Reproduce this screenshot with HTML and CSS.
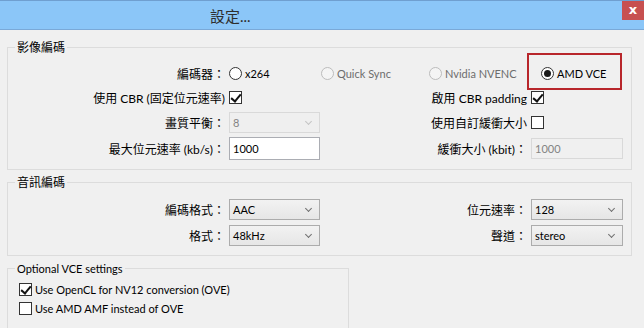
FILE: index.html
```html
<!DOCTYPE html>
<html lang="zh-Hant">
<head>
    <meta charset="UTF-8">
    <title>設定...</title>
    <link rel="stylesheet" href="styles.css">
</head>
<body>
    <div class="titlebar">
        <span class="title">設定...</span>
        <span class="close">x</span>
    </div>

    <fieldset class="group">
        <legend>影像編碼</legend>
        <div class="form-grid video-grid">
            <span class="lbl">編碼器：</span>
            <div class="radios">
                <span class="radio-item w-x264"><span class="radio"></span>x264</span>
                <span class="radio-item w-qsv disabled"><span class="radio"></span>Quick Sync</span>
                <span class="radio-item w-nvenc disabled"><span class="radio"></span>Nvidia NVENC</span>
                <span class="radio-item amd"><span class="radio on"></span>AMD VCE<span class="highlight"></span></span>
            </div>

            <span class="lbl">使用 CBR (固定位元速率)</span>
            <span class="cell"><span class="check on"></span></span>
            <span class="lbl">啟用 CBR padding</span>
            <span class="cell"><span class="check on"></span></span>

            <span class="lbl">畫質平衡：</span>
            <span class="select disabled">8</span>
            <span class="lbl">使用自訂緩衝大小</span>
            <span class="cell"><span class="check"></span></span>

            <span class="lbl">最大位元速率 (kb/s)：</span>
            <span class="textbox">1000</span>
            <span class="lbl">緩衝大小 (kbit)：</span>
            <span class="textbox disabled">1000</span>
        </div>
    </fieldset>

    <fieldset class="group">
        <legend>音訊編碼</legend>
        <div class="form-grid audio-grid">
            <span class="lbl">編碼格式：</span>
            <span class="select">AAC</span>
            <span class="lbl">位元速率：</span>
            <span class="select">128</span>

            <span class="lbl">格式：</span>
            <span class="select">48kHz</span>
            <span class="lbl">聲道：</span>
            <span class="select">stereo</span>
        </div>
    </fieldset>

    <fieldset class="group group-small">
        <legend>Optional VCE settings</legend>
        <div class="option"><span class="check on"></span>Use OpenCL for NV12 conversion (OVE)</div>
        <div class="option"><span class="check"></span>Use AMD AMF instead of OVE</div>
    </fieldset>
</body>
</html>
```

FILE: styles.css
```css
* {
    margin: 0;
    padding: 0;
    box-sizing: border-box;
}

body {
    background: #f0f0f0;
    font-family: Lato, "Noto Sans CJK TC", sans-serif;
    font-size: 12px;
    color: #000;
    overflow: hidden;
}

/* window title */
.titlebar {
    display: flex;
    align-items: flex-start;
    height: 30px;
    background: #8bc6f8;
    border-top: 1px solid #6f9fd0;
    border-bottom: 1px solid #7aa9d8;
}

.title {
    padding: 5px 0 0 210px;
    font-size: 15px;
    line-height: 20px;
    color: #2e2e2e;
}

.close {
    margin-left: auto;
    width: 22px;
    height: 19px;
    background: #c75050;
    color: #fff;
    font-family: "DejaVu Sans", sans-serif;
    font-weight: bold;
    font-size: 13px;
    line-height: 17px;
    text-align: center;
}

/* group boxes */
.group {
    position: relative;
    margin: 10px 12px 0 7px;
    border: 1px solid #dcdcdc;
    padding: 0 8px 9px 0;
}

.group + .group {
    margin-top: 5px;
}

.group legend {
    margin-left: 7px;
    padding: 0 2px;
    line-height: 15px;
}

.group-small {
    width: 342px;
    padding: 5px 0 20px 0;
}

.group-small legend {
    font-size: 11px;
}

.form-grid {
    display: grid;
    grid-template-columns: 217px 91px 203px 92px;
    column-gap: 4px;
    align-items: center;
}

.video-grid {
    padding-top: 8px;
    grid-template-rows: 20px 21px 21px 23px;
    row-gap: 4px;
}

.audio-grid {
    padding-top: 9px;
    grid-template-rows: 21px 21px;
    row-gap: 5px;
}

.lbl {
    text-align: right;
    white-space: nowrap;
}

.cell {
    display: flex;
    align-items: center;
}

/* radio buttons */
.radios {
    grid-column: 2 / -1;
    display: flex;
    align-items: center;
}

.radio-item {
    display: flex;
    align-items: center;
    white-space: nowrap;
    font-size: 11px;
}

.w-x264 { width: 92px; }
.w-qsv { width: 108px; }
.w-nvenc { width: 98px; }

.radio-item.disabled {
    color: #6d6d6d;
}

.radio-item.amd {
    position: relative;
    padding-left: 14px;
}

.radio {
    width: 13px;
    height: 13px;
    margin-right: 3px;
    border: 1px solid #333;
    border-radius: 50%;
    background: #fff;
    display: flex;
    align-items: center;
    justify-content: center;
}

.disabled .radio {
    border-color: #bcbcbc;
    background: #f4f4f4;
}

.radio.on::after {
    content: "";
    width: 7px;
    height: 7px;
    border-radius: 50%;
    background: #1a1a1a;
}

.highlight {
    position: absolute;
    left: 0;
    top: -14px;
    width: 95px;
    height: 37px;
    border: 2px solid #b8262b;
}

/* checkboxes */
.check {
    display: inline-block;
    flex-shrink: 0;
    width: 13px;
    height: 13px;
    border: 1px solid #333;
    background: #fff;
    position: relative;
}

.check.on::after {
    content: "";
    position: absolute;
    left: 3px;
    top: 0;
    width: 4px;
    height: 8px;
    border: solid #111;
    border-width: 0 2px 2px 0;
    transform: rotate(40deg);
}

.option {
    display: flex;
    align-items: center;
    gap: 3px;
    height: 16px;
    margin: 0 0 3px 11px;
    font-size: 11px;
}

/* combo boxes and text fields */
.select {
    height: 21px;
    padding-left: 3px;
    border: 1px solid #acacac;
    background: linear-gradient(#f2f2f2, #e6e6e6);
    font-size: 11px;
    line-height: 19px;
    position: relative;
}

.select::after {
    content: "";
    position: absolute;
    right: 8px;
    top: 6px;
    width: 4px;
    height: 4px;
    border: solid #707070;
    border-width: 0 1px 1px 0;
    transform: rotate(45deg);
}

.select.disabled {
    border-color: #d9d9d9;
    background: #efefef;
    color: #838383;
}

.select.disabled::after {
    border-color: #c4c4c4;
}

.textbox {
    height: 23px;
    padding-left: 3px;
    border: 1px solid #abadb3;
    background: #fff;
    font-size: 11px;
    line-height: 21px;
}

.textbox.disabled {
    height: 21px;
    border-color: #d9d9d9;
    background: #f0f0f0;
    color: #838383;
    line-height: 19px;
}
```
